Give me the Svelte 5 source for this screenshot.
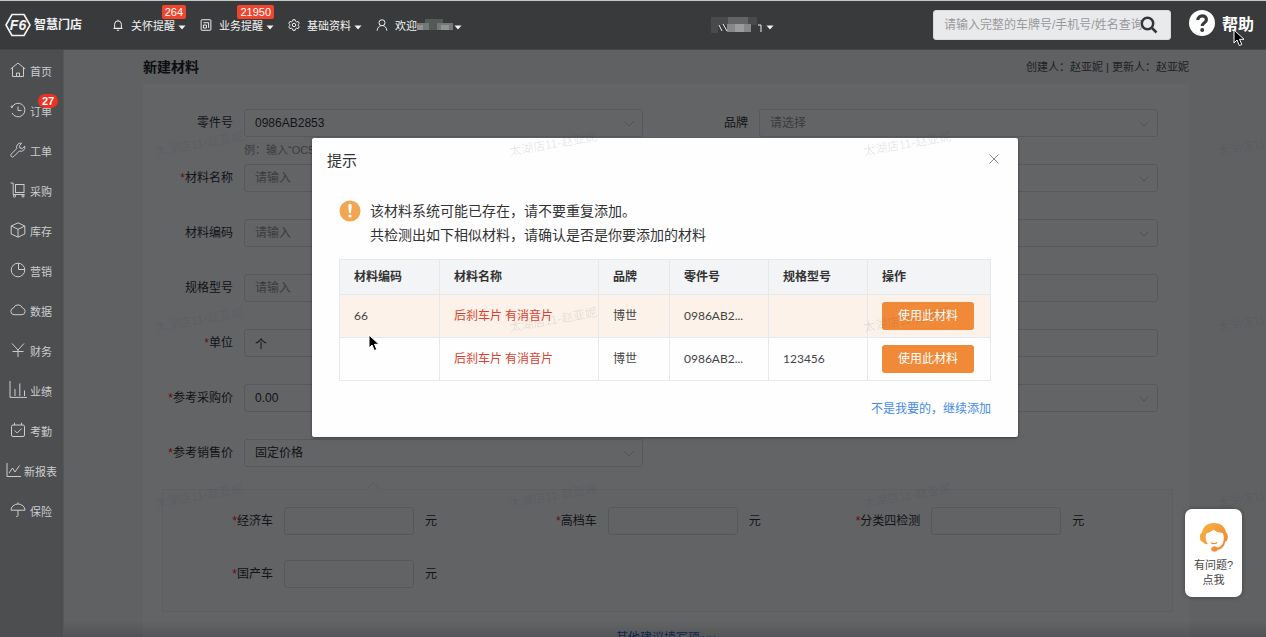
<script>
  const menus = [
    { icon: 'bell', text: '关怀提醒', badge: '264' },
    { icon: 'doc', text: '业务提醒', badge: '21950' },
    { icon: 'gear', text: '基础资料' },
    { icon: 'user', text: '欢迎', masked: true }
  ];

  const sections = [
    { icon: 'home', text: '首页' },
    { icon: 'history', text: '订单', badge: '27' },
    { icon: 'wrench', text: '工单' },
    { icon: 'trolley', text: '采购' },
    { icon: 'box', text: '库存' },
    { icon: 'pie', text: '营销' },
    { icon: 'cloud', text: '数据' },
    { icon: 'yen', text: '财务' },
    { icon: 'bars', text: '业绩' },
    { icon: 'calendar', text: '考勤' },
    { icon: 'line', text: '新报表' },
    { icon: 'umbrella', text: '保险' }
  ];

  const fields = [
    { id: 'part', label: '零件号', kind: 'select', value: '0986AB2853', hint: '例：输入“OC5”' },
    { id: 'brand', label: '品牌', kind: 'select', value: '请选择', empty: true },
    { id: 'name', label: '材料名称', kind: 'input', required: true },
    { id: 'category', label: '材料分类', kind: 'select', value: '' },
    { id: 'code', label: '材料编码', kind: 'input' },
    { id: 'attribute', label: '材料属性', kind: 'select', value: '' },
    { id: 'spec', label: '规格型号', kind: 'input' },
    { id: 'origin', label: '产地', kind: 'input', plain: true },
    { id: 'unit', label: '单位', kind: 'input', value: '个', required: true },
    { id: 'stock', label: '库位', kind: 'input', plain: true },
    { id: 'cost', label: '参考采购价', kind: 'input', value: '0.00', required: true },
    { id: 'supplier', label: '供应商', kind: 'select', value: '' },
    { id: 'price', label: '参考销售价', kind: 'select', value: '固定价格', required: true }
  ];

  const prices = ['经济车', '高档车', '分类四检测', '国产车'];

  const columns = ['材料编码', '材料名称', '品牌', '零件号', '规格型号', '操作'];
  const matches = [
    { code: '66', name: '后刹车片 有消音片', brand: '博世', part: '0986AB2...', spec: '', active: true },
    { code: '', name: '后刹车片 有消音片', brand: '博世', part: '0986AB2...', spec: '123456' }
  ];

  const marks = Array.from({ length: 12 });
</script>

{#snippet caret()}
  <svg class="caret" viewBox="0 0 8 5" aria-hidden="true"><path d="M0.5 0.5h7L4 4.5z" fill="currentColor" /></svg>
{/snippet}

{#snippet chevron()}
  <svg class="chevron" viewBox="0 0 10 6" aria-hidden="true"><path d="M0.5 0.5 5 5 9.5 0.5" /></svg>
{/snippet}

{#snippet pointer()}
  <svg viewBox="0 0 12 18" aria-hidden="true">
    <path d="M1 1v13l3-3 2.3 5.5 2.5-1L6.500 10.300H11z" fill="#000" stroke="#fff" stroke-width="1" />
  </svg>
{/snippet}

{#snippet glyph(name)}
  <svg class="glyph" viewBox="0 0 16 16" aria-hidden="true">
    {#if name === 'bell'}
      <path d="M3.500 12.500V7a4.500 4.500 0 0 1 9 0v5.500zM2 12.500h12M6.500 15h3M8 1v1.500" />
    {:else if name === 'doc'}
      <rect x="1.500" y="1" width="13" height="14" rx="1" /><path d="M4.500 5h7v7M4.500 8h4M4.500 8v4h4V8" />
    {:else if name === 'gear'}
      <path d="M6.500 1h3l.5 2 1.500.9 2-.6 1.500 2.600-1.500 1.400v1.500l1.500 1.400-1.500 2.600-2-.6-1.500.9-.5 2h-3l-.5-2-1.500-.9-2 .6L1 10.200l1.500-1.400V7.300L1 5.900l1.500-2.600 2 .6L6 3z" />
      <circle cx="8" cy="8" r="2.300" />
    {:else if name === 'user'}
      <circle cx="8" cy="5" r="4" /><path d="M1.500 15.500c.5-4 2.500-6 5-6.600M14.500 15.500c-.5-4-2.500-6-5-6.600" />
    {:else if name === 'home'}
      <path d="M.7 7 8 1l7.300 6M2.500 6v8.500h11V6M6.500 14.500v-3.500h3v3.500" />
    {:else if name === 'history'}
      <path d="M1.800 5.500A6.800 6.800 0 1 1 2 11M8 4.500v4h3.500" /><circle cx="1.800" cy="4.800" r=".8" />
    {:else if name === 'wrench'}
      <path d="M11.500 1.200a4 4 0 0 0-4.700 5.300L1.300 12a1.600 1.600 0 0 0 2.500 2.500L9.300 9a4 4 0 0 0 5.400-4.800L12.300 6.500 10 6 9.500 3.700z" />
    {:else if name === 'trolley'}
      <path d="M.5 1h2.700v11.500h11.500" /><rect x="5.500" y="2.500" width="8.500" height="8" /><circle cx="4.500" cy="14" r="1.100" /><circle cx="13" cy="14" r="1.100" />
    {:else if name === 'box'}
      <path d="M8 .8 14.800 4v8L8 15.200 1.200 12V4zM1.200 4 8 7.300 14.800 4M8 7.300v7.900" />
    {:else if name === 'pie'}
      <circle cx="8" cy="8" r="6.800" /><path d="M8.500 1.200v6.300h6.300" />
    {:else if name === 'cloud'}
      <path d="M4 12.700a3.400 3.400 0 0 1-.5-6.700 4.800 4.800 0 0 1 9 0 3.400 3.400 0 0 1-.5 6.700z" />
    {:else if name === 'yen'}
      <path d="M2 1.500 8 8l6-6.500M8 8v7M2.500 9.500h11" />
    {:else if name === 'bars'}
      <path d="M0-1v16.400h17M5 14V7M9.800 14V1.500M14.500 14V8.500" />
    {:else if name === 'calendar'}
      <rect x="1.500" y="3" width="13" height="11.500" rx="1.500" /><path d="M4.500.7V3M11.500.7V3M4.700 8.500l2.500 2.500 4.500-4.500" />
    {:else if name === 'line'}
      <path d="M1 1v13.500h14M3 11l3.500-5 2.500 4 4.500-6.500" />
    {:else if name === 'umbrella'}
      <path d="M1 8.200a7 6.200 0 0 1 14 0zM8 2V.5M8 8.200v5.300a1.200 1.200 0 0 1-1.800.8" />
    {/if}
  </svg>
{/snippet}

<div class="shell">
  <header>
    <div class="brand">
      <svg viewBox="0 0 26 24" aria-hidden="true">
        <path d="M7 1.500h12L25 12l-6 10.500H7L1 12z" fill="none" stroke="currentColor" stroke-width="1.600" stroke-linejoin="round" />
        <text x="13" y="17" text-anchor="middle">F6</text>
      </svg>
      <strong>智慧门店</strong>
    </div>
    <nav class="menus">
      {#each menus as m}
        <button class="menu">
          {@render glyph(m.icon)}
          <span class="menu-text">{m.text}</span>
          {#if m.masked}
            <svg class="mask" viewBox="0 0 36 14" aria-hidden="true">
              <path d="M0 5h36v7H0z" fill="#747978" /><path d="M8 1h18v4H8zM12 5h8v7h-8z" fill="#555a59" /><path d="M0 7h6v5H0zM24 7h8v5h-8z" fill="#8e9392" />
            </svg>
          {/if}
          {@render caret()}
          {#if m.badge}<span class="badge">{m.badge}</span>{/if}
        </button>
      {/each}
    </nav>
    <div class="tools">
      <button class="store" aria-label="门店">
        <svg class="store-mask" viewBox="0 0 52 18" aria-hidden="true">
          <path d="M0 1h46v8H0zM0 9h7v8H0z" fill="#484a4b" /><path d="M17 1h20v7H17z" fill="#626465" /><path d="M16 8h24v8H16z" fill="#858788" /><path d="M24 8h9v8h-9z" fill="#9a9c9d" />
          <path d="M8 9l3 6M12 8l4 7M47 9h3v7" fill="none" stroke="#eee" />
        </svg>
        {@render caret()}
      </button>
      <div class="search">
        <input type="text" aria-label="搜索" placeholder="请输入完整的车牌号/手机号/姓名查询" />
        <svg viewBox="0 0 18 18" aria-hidden="true"><circle cx="7.500" cy="7.500" r="5.700" /><path d="m12 12 4.500 4.500" /></svg>
      </div>
      <a class="help" href="#help">
        <svg viewBox="0 0 26 26" aria-hidden="true">
          <circle cx="13" cy="13" r="13" fill="#fff" />
          <path d="M8.800 10c.2-5.500 8.700-5.500 8.600-.3 0 3-4.200 3-4.200 6.300" fill="none" stroke="#393a3c" stroke-width="3.200" /><circle cx="13.200" cy="20" r="2" fill="#393a3c" />
        </svg>
        帮助
        <span class="pointer">{@render pointer()}</span>
      </a>
    </div>
  </header>

  <div class="body">
    <aside>
      {#each sections as s}
        <a class="section" class:wide={s.text.length > 2} href="#{s.icon}">
          {@render glyph(s.icon)}
          <span class="section-text">{s.text}</span>
          {#if s.badge}<span class="count">{s.badge}</span>{/if}
        </a>
      {/each}
    </aside>

    <main>
      <div class="page">
        <div class="heading">
          <h1>新建材料</h1>
          <span>创建人：赵亚妮 | 更新人：赵亚妮</span>
        </div>
        <form class="panel">
          <div class="fields">
            {#each fields as f}
              <label for={f.id}>{#if f.required}<i>*</i>{/if}{f.label}</label>
              <div class="field">
                {#if f.kind === 'select'}
                  <select id={f.id} class:empty={f.empty}><option>{f.value}</option></select>
                  {@render chevron()}
                {:else}
                  <input id={f.id} type="text" value={f.value ?? ''} placeholder={f.plain ? '' : '请输入'} />
                {/if}
                {#if f.hint}<small>{f.hint}</small>{/if}
              </div>
            {/each}
          </div>
          <div class="prices">
            {#each prices as p, i}
              <div class="price">
                <label for="price-{i}"><i>*</i>{p}</label>
                <input id="price-{i}" type="text" />
                <span>元</span>
              </div>
            {/each}
          </div>
          <a class="more" href="#more">其他建议填写项
            <svg viewBox="0 0 14 8" aria-hidden="true"><path d="M1 2l2.500 3L6 2M8 2l2.500 3L13 2" /></svg>
          </a>
        </form>
      </div>

      <div class="overlay">
        <div class="dialog" role="dialog" aria-labelledby="dialog-title">
          <div class="dialog-head">
            <h2 id="dialog-title">提示</h2>
            <button class="close" aria-label="关闭"><svg viewBox="0 0 10 10" aria-hidden="true"><path d="m.5.500 9 9M9.500.500l-9 9" /></svg></button>
          </div>
          <div class="notice">
            <svg viewBox="0 0 22 22" aria-hidden="true">
              <circle cx="11" cy="11" r="10.500" fill="#f2a654" />
              <path d="M9.300 5.500a1.700 1.700 0 0 1 3.400 0L12 13h-2z" fill="#fff" /><circle cx="11" cy="16" r="1.600" fill="#fff" />
            </svg>
            <p>该材料系统可能已存在，请不要重复添加。<br />共检测出如下相似材料，请确认是否是你要添加的材料</p>
          </div>
          <table>
            <thead><tr>{#each columns as c}<th>{c}</th>{/each}</tr></thead>
            <tbody>
              {#each matches as r}
                <tr class:active={r.active}>
                  <td>{r.code}</td><td class="name">{r.name}</td><td>{r.brand}</td><td>{r.part}</td><td>{r.spec}</td>
                  <td><button class="use">使用此材料</button></td>
                </tr>
              {/each}
            </tbody>
          </table>
          <a class="continue" href="#continue">不是我要的，继续添加</a>
          <span class="pointer">{@render pointer()}</span>
        </div>
      </div>

      <div class="watermarks" aria-hidden="true">
        {#each marks as _}<span>太湖店11-赵亚妮</span>{/each}
      </div>

      <button class="support">
        <svg viewBox="0 0 30 30" aria-hidden="true">
          <defs><linearGradient id="hair" x1="0" y1="0" x2="1" y2="1"><stop offset="0" stop-color="#f5b53f" /><stop offset="1" stop-color="#f08036" /></linearGradient></defs>
          <path d="M3 10.500C4 4 9 1 15 1s11 3 12 9.500c2.500 1 2.600 8.500-.8 9.500-1 4.500-3.200 7-7.700 8a3.300 2.700 0 1 1-.2-2.400c3-.6 4.800-2.300 5.700-4.800 1.300-4 1-7.500-.5-9.800-4-.3-7-1.500-9-3.500-1.800 2-4 3-7 3.800-1.500 3-1.200 7.300 1.500 11C5.500 22 4.500 21 4 20c-4-.5-4-8-1-9.500z" fill="url(#hair)" />
          <path d="M12 20.500c1.500 1.500 4.500 1.500 6 0" fill="none" stroke="#f08a38" stroke-width="1.200" />
        </svg>
        <span>有问题?<br />点我</span>
      </button>
    </main>
  </div>
</div>

<style>
  :global(body) { margin: 0; }
  * { box-sizing: border-box; }
  .shell { display: flex; flex-direction: column; height: 100vh; overflow: hidden; font: 12px/16px "Liberation Sans", "Noto Sans CJK SC", sans-serif; color: #333; }
  button, input, select { font: inherit; color: inherit; margin: 0; }
  button { border: 0; background: none; padding: 0; cursor: pointer; }
  a { color: inherit; text-decoration: none; }
  svg { display: block; flex: none; }

  header { display: flex; align-items: center; flex: none; height: 50px; padding: 0 12px 0 5px; border-top: 1px solid #c4c9ca; border-bottom: 1px solid #474544; background: #393a3c; color: #f2f3f3; }
  .brand { display: flex; align-items: center; gap: 3px; }
  .brand svg { width: 26px; height: 24px; }
  .brand text { font: italic bold 14px "Liberation Sans", sans-serif; fill: currentColor; }
  .brand strong { font-size: 12px; }
  .glyph { width: 16px; height: 16px; fill: none; stroke: currentColor; stroke-width: 1; overflow: visible; }
  .menus { display: flex; gap: 14px; margin-left: 30px; }
  .menu { position: relative; display: flex; align-items: center; font-size: 11px; }
  .menu .glyph { width: 12px; height: 12px; margin-right: 7px; stroke-width: 1.300; }
  .menu-text { padding-top: 2px; }
  .caret { width: 8px; height: 5px; margin: 4px 0 0 3px; }
  .mask { width: 36px; height: 14px; }
  .mask + .caret { margin-left: 1px; }
  .badge { position: absolute; right: 0; top: -11px; padding: 0 3px; border-radius: 2px; background: #f0452d; line-height: 14px; color: #fff; }
  .tools { display: flex; align-items: center; margin-left: auto; }
  .store { display: flex; align-items: center; margin-right: 159px; }
  .store-mask { width: 52px; height: 18px; }
  .search { position: relative; width: 238px; margin-right: 18px; }
  .search input { display: block; width: 100%; height: 30px; padding: 0 20px 0 10px; border: 1px solid #d8dadb; border-radius: 3px; background: #e9eaec; color: #333; }
  .search input::placeholder { color: #999; opacity: 1; }
  .search svg { position: absolute; right: 13px; top: 6px; width: 18px; height: 18px; fill: none; stroke: #333538; stroke-width: 2.500; }
  .help { position: relative; display: flex; align-items: center; gap: 7px; font-size: 16px; font-weight: bold; color: #fff; }
  .help > svg { width: 26px; height: 26px; margin-top: -4px; }
  .pointer { position: absolute; width: 12px; }
  .help .pointer { right: 9px; top: 15px; }

  .body { display: flex; flex: 1; min-height: 0; }
  aside { flex: none; width: 64px; background: #4d4e50; border-right: 1px solid #555658; color: #cbcccd; font-size: 11px; }
  .section { position: relative; display: flex; align-items: center; gap: 4px; height: 40px; padding-left: 10px; }
  .section.wide { padding-left: 6px; gap: 2px; }
  .section-text { padding-top: 4px; }
  .count { position: absolute; left: 38px; top: 4px; width: 20px; border-radius: 7px; background: #ec3323; line-height: 14px; text-align: center; font-weight: bold; color: #fff; }

  main { position: relative; flex: 1; min-width: 0; overflow: hidden; background: #f6f6f6; }
  .page { padding: 0 77px 0 79px; }
  .heading { display: flex; align-items: center; justify-content: space-between; height: 34px; font-size: 11px; color: #555; }
  h1 { margin: 0; font-size: 14px; line-height: 20px; color: #222; }
  .panel { padding-top: 25px; background: #fff; }
  .fields { display: grid; grid-template-columns: 90px 1fr 94px 1fr; grid-auto-rows: 55px; column-gap: 11px; padding-right: 31px; }
  label { line-height: 28px; text-align: right; white-space: nowrap; }
  i { font-style: normal; color: #f22; }
  .field { position: relative; min-width: 0; }
  .panel input, .panel select { display: block; appearance: none; width: 100%; height: 28px; padding: 0 10px; border: 1px solid #e0e1e3; border-radius: 3px; background: transparent; outline: 0; }
  .panel input::placeholder, .panel select.empty { color: #999; opacity: 1; }
  .chevron { position: absolute; right: 9px; top: 12px; width: 10px; height: 6px; fill: none; stroke: #ccc; }
  small { display: block; font-size: 11px; line-height: 26px; color: #999; }
  .prices { position: relative; display: grid; grid-template-columns: repeat(3, 1fr); row-gap: 25px; margin: -5px 16px 0 19px; padding: 17px 38px 23px 0; border: 1px solid #eeeff1; background: #fbfbfb; }
  .prices::before { content: ""; position: absolute; left: 205px; top: -6px; width: 9px; height: 9px; border: solid #eeeff1; border-width: 1px 0 0 1px; background: #fbfbfb; transform: rotate(45deg); }
  .price { display: grid; grid-template-columns: 110px 130px auto; column-gap: 11px; line-height: 28px; }
  .more { display: flex; align-items: center; justify-content: center; gap: 2px; padding: 18px 0; color: #2d6fe0; }
  .more svg { width: 14px; height: 8px; fill: none; stroke: currentColor; }

  .overlay { position: absolute; inset: 0; display: flex; align-items: flex-start; justify-content: center; padding-top: 88px; background: linear-gradient(to top, rgba(0, 0, 0, .15), transparent 16px), rgba(0, 2, 5, .61); }
  .dialog { position: relative; width: 59%; max-width: 706px; padding: 13px 27px 20px; border-radius: 2px; background: #fefefe; box-shadow: 0 1px 3px rgba(0, 0, 0, .4); }
  .dialog-head { display: flex; align-items: center; justify-content: space-between; margin: 0 -12px; }
  h2 { margin: 0; font-size: 15px; line-height: 20px; font-weight: normal; }
  .close svg { width: 10px; height: 10px; margin: 0 4px 4px 0; fill: none; stroke: #888; }
  .notice { display: flex; gap: 9px; margin: 28px 0 12px; font-size: 14px; line-height: 24px; }
  .notice svg { width: 22px; height: 22px; margin-top: 1px; }
  .notice p { margin: 0; }
  table { width: 100%; table-layout: fixed; border-collapse: collapse; font-family: Lato, "Noto Sans CJK SC", sans-serif; }
  th, td { height: 43px; padding: 0 0 0 14px; border: 1px solid #e6e9eb; text-align: left; white-space: nowrap; color: #444; }
  th { height: 35px; background: #f3f4f6; color: #333; }
  th:nth-child(1) { width: 100px; }
  th:nth-child(2) { width: 159px; }
  th:nth-child(3) { width: 71px; }
  th:nth-child(4), th:nth-child(5) { width: 99px; }
  .active td { background: #fcf2e9; }
  td.name { color: #d8412f; }
  .use { display: block; padding: 0 16px; border-radius: 3px; background: #f08a38; line-height: 28px; color: #fff; }
  .continue { display: block; margin-top: 20px; text-align: right; color: #4389e8; }
  .dialog .pointer { left: 56px; top: 196px; }

  .watermarks { position: absolute; left: 91px; top: 86px; display: grid; grid-template-columns: repeat(4, 354px); grid-auto-rows: 176px; pointer-events: none; color: rgba(50, 50, 80, .12); }
  .watermarks span { justify-self: start; align-self: start; transform: rotate(-10deg); }
  .support { position: absolute; right: 24px; bottom: 40px; display: flex; flex-direction: column; align-items: center; gap: 6px; width: 57px; padding: 13px 0 9px; border-radius: 7px; background: #fff; box-shadow: 0 0 5px rgba(0, 0, 0, .3); font-size: 11px; line-height: 15px; color: #444; }
  .support svg { width: 30px; height: 30px; }
</style>
